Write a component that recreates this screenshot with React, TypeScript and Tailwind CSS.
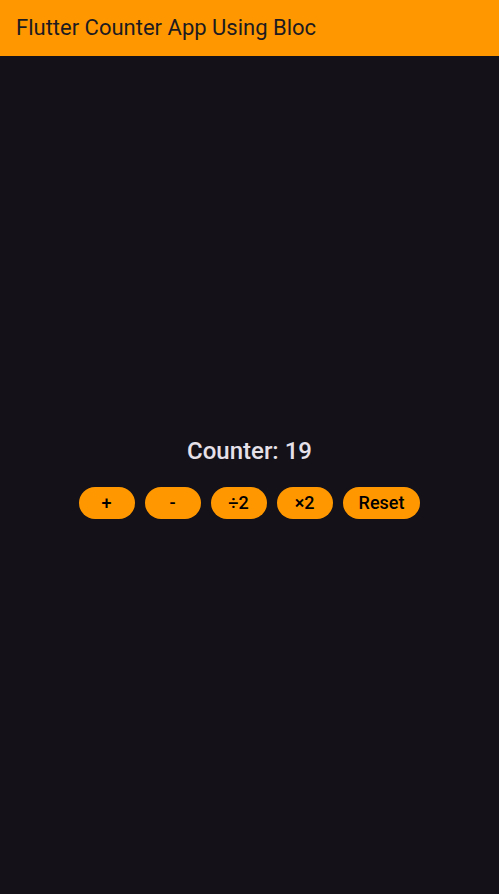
import React from "react";

export default function App() {
  const buttons = ["+", "-", "÷2", "×2", "Reset"];
  return (
    <div className="w-[499px] h-[894px] flex flex-col bg-[#141218]" style={{ fontFamily: "Roboto, 'Liberation Sans', sans-serif" }}>
      <div className="h-[56px] bg-[#ff9800] flex items-center px-4 shrink-0">
        <span className="text-[22px] text-[#1d1b20] leading-none">Flutter Counter App Using Bloc</span>
      </div>
      <div className="flex-1 flex flex-col items-center justify-center pt-[6px]">
        <div className="text-[24px] font-medium text-[#e6e0e9] leading-[28px]">Counter: 19</div>
        <div className="flex gap-[10px] mt-[22px]">
          {buttons.map((b) => (
            <button
              key={b}
              className="h-[32px] min-w-[56px] px-4 rounded-full bg-[#ff9800] text-[18px] font-medium text-[#000] leading-none flex items-center justify-center"
            >
              {b}
            </button>
          ))}
        </div>
      </div>
    </div>
  );
}
